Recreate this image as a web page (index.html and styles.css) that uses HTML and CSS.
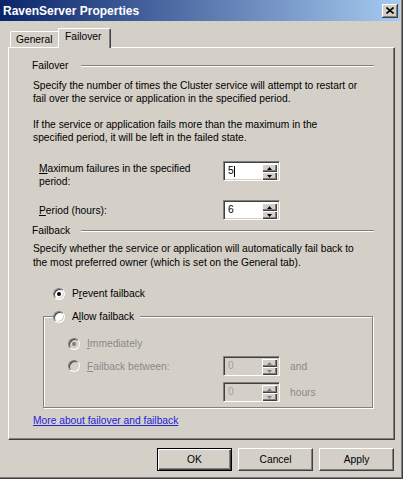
FILE: index.html
```html
<!DOCTYPE html>
<html>
<head>
<meta charset="utf-8">
<title>RavenServer Properties</title>
<link rel="stylesheet" href="styles.css">
</head>
<body>
<div class="window">
  <div class="titlebar">
    <span class="title">RavenServer Properties</span>
    <span class="close"><svg width="8" height="7" viewBox="0 0 8 7"><path d="M0.5 0.5L7.5 6.5M7.5 0.5L0.5 6.5" stroke="#000" stroke-width="1.6" fill="none"/></svg></span>
  </div>
  <div class="tabs">
    <div class="tab">General</div>
    <div class="tab sel">Failover</div>
  </div>
  <div class="panel">
    <div class="ghead"><span class="glabel">Failover</span><span class="gline"></span></div>
    <p class="para p1">Specify the number of times the Cluster service will attempt to restart or<br>fail over the service or application in the specified period.</p>
    <p class="para p2">If the service or application fails more than the maximum in the<br>specified period, it will be left in the failed state.</p>

    <div class="frow r1">
      <span class="flabel"><u>M</u>aximum failures in the specified<br>period:</span>
      <div class="spin">
        <span class="val">5<i class="caret"></i></span>
        <span class="btns">
          <b class="sb"><svg width="5" height="3" viewBox="0 0 5 3"><path d="M2.5 0L5 3H0z"/></svg></b>
          <b class="sb"><svg width="5" height="3" viewBox="0 0 5 3"><path d="M0 0H5L2.5 3z"/></svg></b>
        </span>
      </div>
    </div>

    <div class="frow r2">
      <span class="flabel single"><u>P</u>eriod (hours):</span>
      <div class="spin">
        <span class="val">6</span>
        <span class="btns">
          <b class="sb"><svg width="5" height="3" viewBox="0 0 5 3"><path d="M2.5 0L5 3H0z"/></svg></b>
          <b class="sb"><svg width="5" height="3" viewBox="0 0 5 3"><path d="M0 0H5L2.5 3z"/></svg></b>
        </span>
      </div>
    </div>

    <div class="ghead g2"><span class="glabel">Failback</span><span class="gline"></span></div>
    <p class="para p3">Specify whether the service or application will automatically fail back to<br>the most preferred owner (which is set on the General tab).</p>

    <div class="rrow prevent"><span class="radio on"></span><span>P<u>r</u>event failback</span></div>

    <div class="sub">
      <div class="legend"><span class="radio"></span><span>A<u>l</u>low failback</span></div>
      <div class="rrow sr1 dis"><span class="radio on dis"></span><span><u>I</u>mmediately</span></div>
      <div class="srow sr2 dis">
        <span class="radio dis"></span>
        <span class="slabel"><u>F</u>ailback between:</span>
        <div class="spin dis">
          <span class="val">0</span>
          <span class="btns">
            <b class="sb"><svg width="5" height="3" viewBox="0 0 5 3"><path d="M2.5 0L5 3H0z"/></svg></b>
            <b class="sb"><svg width="5" height="3" viewBox="0 0 5 3"><path d="M0 0H5L2.5 3z"/></svg></b>
          </span>
        </div>
        <span class="unit">and</span>
      </div>
      <div class="srow sr3 dis">
        <div class="spin dis">
          <span class="val">0</span>
          <span class="btns">
            <b class="sb"><svg width="5" height="3" viewBox="0 0 5 3"><path d="M2.5 0L5 3H0z"/></svg></b>
            <b class="sb"><svg width="5" height="3" viewBox="0 0 5 3"><path d="M0 0H5L2.5 3z"/></svg></b>
          </span>
        </div>
        <span class="unit">hours</span>
      </div>
    </div>

    <a class="link" href="#">More about failover and failback</a>
  </div>
  <div class="actions">
    <button class="btn def">OK</button>
    <button class="btn">Cancel</button>
    <button class="btn">Apply</button>
  </div>
</div>
</body>
</html>
```

FILE: styles.css
```css
* { box-sizing: border-box; margin: 0; padding: 0; }
html, body { width: 403px; height: 479px; overflow: hidden; background: #d4d0c8; }
body { font-family: "Liberation Sans", Arial, sans-serif; font-size: 10.25px; color: #000; }
u { text-decoration: underline; }

.window {
  width: 403px; height: 479px; background: #d4d0c8;
  box-shadow: inset -1px -1px 0 #404040, inset -2px -2px 0 #808080;
  display: flex; flex-direction: column;
}

.titlebar {
  width: 400px; height: 21px;
  background: linear-gradient(to right, #0a246a, #a6caf0);
  display: flex; align-items: center; justify-content: space-between;
  padding: 0 2px 0 3px;
}
.title { color: #fff; font-weight: bold; font-size: 12px; line-height: 14px; }
.close {
  width: 16px; height: 14px; background: #d4d0c8;
  box-shadow: inset -1px -1px 0 #404040, inset 1px 1px 0 #fff, inset -2px -2px 0 #808080;
  display: flex; align-items: center; justify-content: center;
}
.close svg { display: block; }

.tabs {
  display: flex; align-items: flex-end; height: 19px; margin-top: 7px;
  padding-left: 10px; position: relative; z-index: 1;
}
.tab {
  height: 16px; width: 50px;
  border-top: 1px solid #fff; border-left: 1px solid #fff; border-right: 1px solid #404040;
  box-shadow: inset -1px 0 0 #808080;
  border-radius: 2px 2px 0 0;
  padding: 2px 0 0 5px; line-height: 12px; background: #d4d0c8;
}
.tab.sel { height: 20px; width: 53px; margin-left: -2px; margin-bottom: -1px; padding-left: 6px; }

.panel {
  margin-left: 8px; width: 387px; height: 393px;
  border-top: 1px solid #fff; border-left: 1px solid #fff;
  border-right: 1px solid #404040; border-bottom: 1px solid #404040;
  box-shadow: inset -1px -1px 0 #808080;
  padding: 12px 20px 0 23px;
  display: flex; flex-direction: column; align-items: flex-start;
}

.ghead { display: flex; align-items: center; height: 12px; width: 100%; }
.glabel { width: 49px; line-height: 12px; }
.gline { flex: 1; height: 2px; border-top: 1px solid #808080; border-bottom: 1px solid #fff; }
.g2 { margin-top: 5px; }

.para { margin-left: 1px; line-height: 13px; }
.p1 { margin-top: 7px; }
.p2 { margin-top: 13px; }
.p3 { margin-top: 5px; line-height: 14px; }

.frow { display: flex; align-items: flex-start; }
.r1 { margin-top: 17px; }
.r2 { margin-top: 12px; align-items: center; }
.flabel { width: 184px; margin-left: 7px; line-height: 13px; margin-top: 1px; }
.flabel.single { margin-top: 0; }

.spin {
  width: 57px; height: 20px; display: flex; background: #fff;
  border: 1px solid; border-color: #808080 #fff #fff #808080;
  box-shadow: inset 1px 1px 0 #404040, inset -1px -1px 0 #d4d0c8;
  padding: 2px 2px 2px 2px;
}
.val { flex: 1; display: flex; align-items: center; padding-left: 2px; line-height: 12px; }
.caret { display: inline-block; width: 1px; height: 11px; background: #000; margin-left: 0; }
.btns { width: 15px; height: 16px; display: flex; flex-direction: column; }
.sb {
  height: 8px; display: flex; align-items: center; justify-content: center;
  background: #d4d0c8;
  box-shadow: inset 1px 1px 0 #fff, inset -1px -1px 0 #404040, inset -2px -2px 0 #808080;
}
.sb svg { display: block; fill: #000; }
.spin.dis { background: #d4d0c8; }
.spin.dis .val { color: #a0a0a0; }
.spin.dis .sb svg { fill: #808080; }

.rrow { display: flex; align-items: center; gap: 7px; height: 13px; line-height: 13px; }
.prevent { margin-top: 17px; margin-left: 21px; }

.radio {
  width: 12px; height: 12px; border-radius: 50%; background: #fff; position: relative;
  border: 1px solid; border-color: #808080 #fff #fff #808080;
  box-shadow: inset 1px 1px 0 #404040, inset -1px -1px 0 #d4d0c8;
  flex: none;
}
.radio.on::after {
  content: ""; position: absolute; left: 3px; top: 3px; width: 4px; height: 4px;
  border-radius: 50%; background: #000;
}
.radio.dis { background: #d4d0c8; }
.radio.dis.on::after { background: #808080; }

.sub {
  margin-top: 16px; margin-left: 11px; width: 330px; height: 92px;
  border: 1px solid #808080; box-shadow: inset 1px 1px 0 #fff, 1px 1px 0 #fff;
  display: flex; flex-direction: column; align-items: flex-start;
}
.legend {
  display: flex; align-items: center; gap: 7px; height: 13px; line-height: 13px;
  margin-top: -7px; margin-left: 9px; padding-right: 6px; background: #d4d0c8;
}
.dis { color: #8a8a8a; }
.sr1 { margin-top: 14px; margin-left: 24px; }
.srow { display: flex; align-items: center; height: 20px; }
.sr2 { margin-top: 6px; margin-left: 24px; }
.sr2 .radio { margin-right: 7px; }
.slabel { width: 136px; }
.unit { margin-left: 10px; }
.sr3 { margin-top: 6px; margin-left: 179px; }

.link { margin-top: 6px; margin-left: 1px; line-height: 13px; color: #2323d8; text-decoration: underline; }

.actions { display: flex; justify-content: flex-end; gap: 6px; margin-top: 8px; width: 394px; }
.btn {
  width: 75px; height: 23px; display: flex; align-items: center; justify-content: center;
  background: #d4d0c8; font: inherit; color: #000;
  border: 1px solid; border-color: #fff #404040 #404040 #fff;
  box-shadow: inset -1px -1px 0 #808080;
}
.btn.def {
  border-color: #000;
  box-shadow: inset 1px 1px 0 #fff, inset -1px -1px 0 #404040, inset -2px -2px 0 #808080;
}
```
